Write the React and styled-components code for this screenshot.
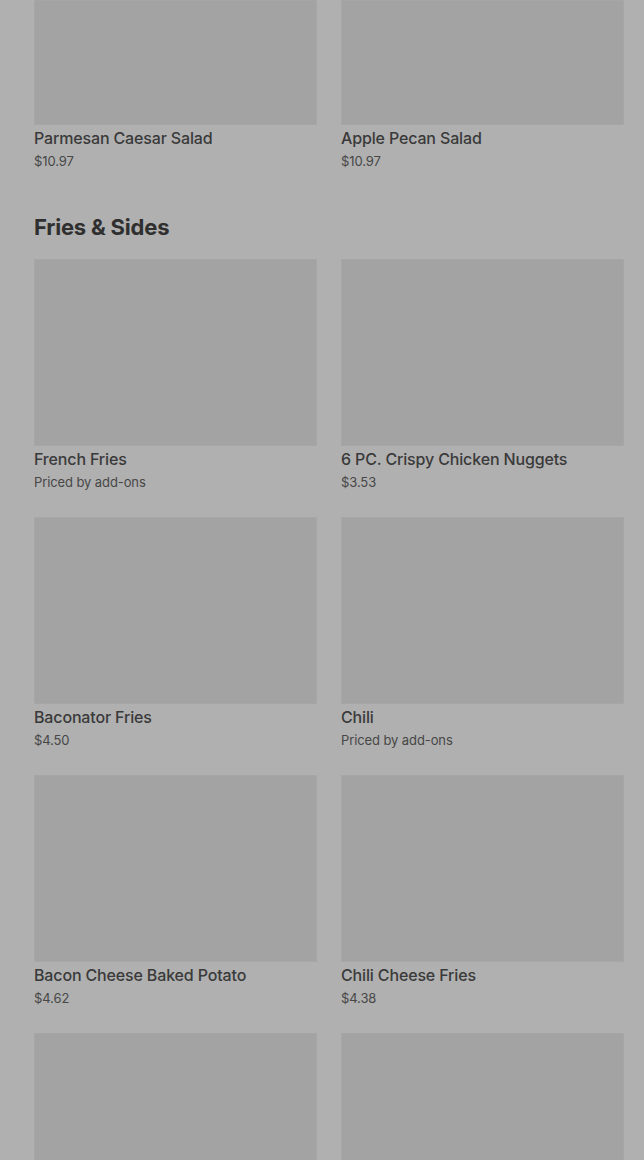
import React from 'react';
import styled, { createGlobalStyle } from 'styled-components';

const GlobalStyle = createGlobalStyle`
  html, body {
    margin: 0;
    padding: 0;
    background: #b0b0b0;
  }

  body {
    font-family: Inter, Roboto, 'Liberation Sans', sans-serif;
    color: #3a3a3a;
    overflow: hidden;
  }
`;

const StyledPage = styled.main`
  width: 644px;
  height: 1160px;
  overflow: hidden;
  padding: 0 20px 0 34px;
  box-sizing: border-box;
  background: #b0b0b0;
`;

const StyledSection = styled.section`
  margin-bottom: ${({ last }) => (last ? '0' : '25px')};
`;

const StyledHeading = styled.h2`
  margin: 0;
  padding: 18px 0 18px;
  font-size: 22px;
  line-height: 28px;
  font-weight: 700;
  letter-spacing: -0.2px;
  color: #2f2f2f;
`;

const StyledGrid = styled.ul`
  display: grid;
  grid-template-columns: repeat(2, 283px);
  column-gap: 24px;
  row-gap: 26px;
  margin: 0;
  padding: 0;
  list-style: none;
`;

const StyledCard = styled.li`
  display: flex;
  flex-direction: column;
`;

const StyledImage = styled.div`
  height: ${({ height }) => height}px;
  background: #a3a3a3;
  box-shadow: inset 0 0 0 1px #a6a6a6;
`;

const StyledTitle = styled.h3`
  margin: 3px 0 0;
  font-size: 16px;
  line-height: 20px;
  font-weight: 500;
  letter-spacing: -0.15px;
  color: #3a3a3a;
`;

const StyledPrice = styled.p`
  margin: 4px 0 0;
  font-size: 13px;
  line-height: 18px;
  font-weight: 400;
  letter-spacing: -0.1px;
  color: #474747;
`;

const salads = [
  { name: 'Parmesan Caesar Salad', price: '$10.97' },
  { name: 'Apple Pecan Salad', price: '$10.97' },
];

const sides = [
  { name: 'French Fries', price: 'Priced by add-ons' },
  { name: '6 PC. Crispy Chicken Nuggets', price: '$3.53' },
  { name: 'Baconator Fries', price: '$4.50' },
  { name: 'Chili', price: 'Priced by add-ons' },
  { name: 'Bacon Cheese Baked Potato', price: '$4.62' },
  { name: 'Chili Cheese Fries', price: '$4.38' },
  { name: '', price: '' },
  { name: '', price: '' },
];

const Card = ({ item, imageHeight = 187 }) => (
  <StyledCard>
    <StyledImage height={imageHeight} />
    {item.name && <StyledTitle>{item.name}</StyledTitle>}
    {item.price && <StyledPrice>{item.price}</StyledPrice>}
  </StyledCard>
);

const App = () => (
  <>
    <GlobalStyle />
    <StyledPage>
      <StyledSection>
        <StyledGrid>
          {salads.map((item, i) => (
            <Card key={i} item={item} imageHeight={125} />
          ))}
        </StyledGrid>
      </StyledSection>

      <StyledSection last>
        <StyledHeading>Fries &amp; Sides</StyledHeading>
        <StyledGrid>
          {sides.map((item, i) => (
            <Card key={i} item={item} />
          ))}
        </StyledGrid>
      </StyledSection>
    </StyledPage>
  </>
);

export default App;
